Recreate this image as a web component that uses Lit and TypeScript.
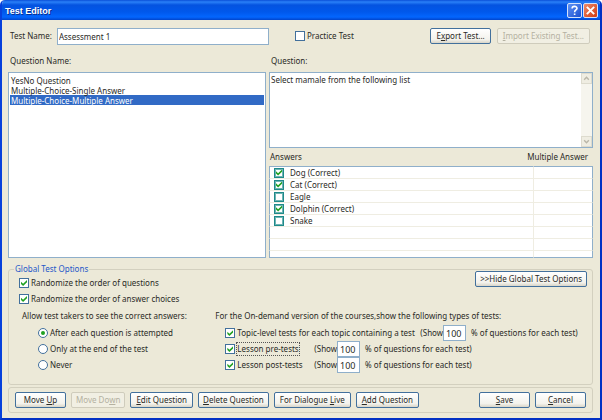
import { LitElement, html, css } from "lit";
import { customElement, state } from "lit/decorators.js";

interface Answer {
  label: string;
  checked: boolean;
}

@customElement("app-root")
export class AppRoot extends LitElement {
  static styles = css`
    :host {
      display: block;
      font: 8px/12px "Noto Sans", "Open Sans", sans-serif;
      color: #2a2a26;
      background: #fff;
    }
    * {
      box-sizing: border-box;
    }
    input,
    button,
    select,
    textarea {
      font: inherit;
      color: inherit;
      margin: 0;
    }
    .window {
      min-height: 100vh;
      display: flex;
      flex-direction: column;
      background: #ece9d8;
      border: solid #0640dc;
      border-width: 0 2px 2px;
      border-right-color: #0230c4;
      border-bottom-color: #0230c4;
      border-radius: 5px 5px 0 0;
      overflow: hidden;
    }
    .titlebar {
      height: 20px;
      display: flex;
      align-items: center;
      gap: 1px;
      padding: 1px 2px 0 3px;
      background: linear-gradient(#0a4fd8, #2a80f8 10%, #0453e0 25%, #0058ec 60%, #0366fe 85%, #0144cc);
      color: #fff;
    }
    .titlebar h1 {
      flex: 1;
      margin: 0;
      font: bold 9px/12px "Liberation Sans", Arial, sans-serif;
      text-shadow: 1px 1px #0a2f8c;
    }
    .caption {
      width: 15px;
      height: 15px;
      padding: 0;
      border: 1px solid #d5e2fb;
      border-radius: 2px;
      background: linear-gradient(135deg, #5e92f5, #1d50cf);
      display: flex;
    }
    .caption.close {
      background: linear-gradient(135deg, #ee8a6a, #cf3c12);
    }
    .caption svg {
      width: 13px;
      height: 13px;
    }
    main {
      flex: 1;
      display: flex;
      flex-direction: column;
      padding: 7px 7px 4px 6px;
    }
    .top {
      display: flex;
      align-items: center;
      height: 18px;
      padding: 0 3px 0 2px;
    }
    .name {
      width: 259px;
      display: flex;
      align-items: center;
      gap: 5px;
      margin-right: 26px;
    }
    .text {
      flex: 1;
      min-width: 0;
      height: 17px;
      padding: 0 1px;
      border: 1px solid #8fafca;
      background: #fff;
      outline: 0;
    }
    .push {
      margin-left: auto;
    }
    .btn {
      height: 16px;
      padding: 0 4px;
      border: 1px solid #42709c;
      border-radius: 2px;
      background: linear-gradient(#fff, #f3f2ec 75%, #d9d5c8);
      white-space: nowrap;
      line-height: 12px;
    }
    .btn:disabled {
      border-color: #cfccbc;
      background: #f1efe3;
      color: #b4b1a1;
    }
    .roomy {
      padding: 0 5px;
    }
    .wide {
      min-width: 51px;
    }
    .gap {
      margin-left: 6px;
    }
    .check {
      display: flex;
      align-items: center;
      gap: 2px;
      white-space: nowrap;
    }
    .box {
      appearance: none;
      flex: none;
      width: 10px;
      height: 10px;
      border: 1px solid #42709c;
      background: #fff;
      display: grid;
      place-items: center;
    }
    .box:checked::before {
      content: "";
      width: 6px;
      height: 6px;
      background: #21a121;
      clip-path: polygon(0 30%, 35% 62%, 100% 0, 100% 38%, 35% 100%, 0 68%);
    }
    .box.teal {
      border-color: #1f8a8a;
      box-shadow: inset 0 0 0 1px #6fb5b5;
    }
    .dot {
      border-radius: 50%;
    }
    .box.dot:checked::before {
      width: 4px;
      height: 4px;
      border-radius: 50%;
      clip-path: none;
    }
    .panes {
      display: grid;
      grid-template-columns: 258fr 324fr;
      column-gap: 3px;
      margin-top: 10px;
    }
    .pane {
      display: flex;
      flex-direction: column;
      min-width: 0;
    }
    .pane > label {
      height: 17px;
      padding-left: 2px;
    }
    .list {
      flex: 1;
      appearance: none;
      border: 1px solid #8fafca;
      border-radius: 0;
      background: #fff;
      padding: 2px 1px;
      outline: 0;
      overflow: hidden;
    }
    .list option {
      min-height: 0;
      height: 10px;
      line-height: 10px;
      padding: 0 1px;
      color: #2a2a26;
    }
    .list option:checked {
      background: linear-gradient(#316ac5, #316ac5);
      -webkit-text-fill-color: #fff;
    }
    .prompt {
      display: flex;
      height: 76px;
      border: 1px solid #8fafca;
      background: #fff;
    }
    .prompt textarea {
      flex: 1;
      min-width: 0;
      border: 0;
      padding: 1px;
      outline: 0;
      resize: none;
      background: none;
    }
    .scroll {
      width: 11px;
      display: flex;
      flex-direction: column;
      justify-content: space-between;
      background: #f6f5ee;
    }
    .arrow {
      height: 11px;
      padding: 1px;
      border: 1px solid #dddbce;
      background: #efede2;
      display: flex;
    }
    .arrow svg {
      width: 100%;
      height: 100%;
    }
    table {
      width: 100%;
      border-spacing: 0;
      table-layout: fixed;
    }
    th {
      height: 18px;
      padding: 0 1px;
      font-weight: normal;
      text-align: left;
      white-space: nowrap;
    }
    th:last-child {
      width: 60px;
      direction: rtl;
      text-align: right;
      padding-right: 5px;
    }
    tbody {
      background: #fff;
    }
    td {
      height: 12px;
      padding: 0 4px;
      border-bottom: 1px solid #efede2;
      line-height: 11px;
    }
    td:first-child {
      border-left: 1px solid #8fafca;
    }
    td:last-child {
      border-left: 1px solid #efede2;
      border-right: 1px solid #8fafca;
    }
    tbody tr:first-child td {
      height: 13px;
      border-top: 1px solid #8fafca;
    }
    tbody tr:last-child td {
      height: 7px;
      border-bottom: 1px solid #8fafca;
    }
    td .check {
      gap: 6px;
      height: 11px;
    }
    fieldset {
      display: grid;
      grid-template-columns: 201fr 371fr;
      margin: 5px 0 0;
      min-width: 0;
      padding: 0 5px 11px;
      border: 1px solid #d3d0bf;
      border-radius: 3px;
    }
    legend {
      padding: 0 1px;
      color: #2458c8;
    }
    .col {
      min-width: 0;
      display: flex;
      flex-direction: column;
    }
    .row {
      height: 16px;
      display: flex;
      align-items: center;
      white-space: nowrap;
    }
    .general {
      padding-left: 5px;
    }
    .heading {
      height: 18px;
      display: flex;
      align-items: center;
      white-space: nowrap;
    }
    .general .heading {
      padding-left: 3px;
    }
    .radios {
      padding-left: 19px;
    }
    .hide {
      height: 36px;
      margin-top: -4px;
      display: flex;
      justify-content: flex-end;
      align-items: flex-start;
    }
    .types {
      padding-left: 10px;
    }
    .lesson {
      width: 89px;
    }
    .topic {
      width: 195px;
    }
    .focus {
      outline: 1px dotted #555;
    }
    .pct {
      display: flex;
      align-items: center;
    }
    .pct input {
      width: 23px;
      height: 16px;
      padding: 0 2px;
      margin-right: 5px;
      border: 1px solid #8fafca;
      background: #fff;
      outline: 0;
      font-size: 9px;
    }
    .actions {
      display: flex;
      gap: 5px;
      margin-top: 2px;
      padding: 4px 6px;
      border: 1px solid #d3d0bf;
      border-radius: 3px;
    }
  `;

  @state() private answers: Answer[] = [
    { label: "Dog (Correct)", checked: true },
    { label: "Cat (Correct)", checked: true },
    { label: "Eagle", checked: false },
    { label: "Dolphin (Correct)", checked: true },
    { label: "Snake", checked: false },
  ];

  private blankRows = [0, 1, 2];

  private testType(label: unknown, size: string) {
    return html`<div class="row">
      <label class="check ${size}"><input class="box" type="checkbox" checked />${label}</label>
      <label class="pct">(Show<input type="text" value="100" /></label>
      <span>% of questions for each test)</span>
    </div>`;
  }

  private arrow(points: string, name: string) {
    return html`<button class="arrow" aria-label=${name} disabled>
      <svg viewBox="0 0 6 6"><polyline points=${points} fill="none" stroke="#b9b6a8" stroke-width="1.2" /></svg>
    </button>`;
  }

  render() {
    return html`<div class="window">
      <header class="titlebar">
        <h1>Test Editor</h1>
        <button class="caption" aria-label="Help">
          <svg viewBox="0 0 12 12" fill="none" stroke="#fff" stroke-width="1.5">
            <path d="M3.8 4.2C3.8 1.5 8.3 1.5 8.3 4C8.3 5.6 6.1 5.5 6.1 7.6M6.1 8.7V10.2" />
          </svg>
        </button>
        <button class="caption close" aria-label="Close">
          <svg viewBox="0 0 12 12" stroke="#fff" stroke-width="1.8"><path d="M2.6 2.6L9.4 9.4M9.4 2.6L2.6 9.4" /></svg>
        </button>
      </header>
      <main>
        <div class="top">
          <div class="name">
            <label for="name">Test Name:</label>
            <input class="text" id="name" type="text" value="Assessment 1" />
          </div>
          <label class="check"><input class="box" type="checkbox" />Practice Test</label>
          <button class="btn roomy push">E<u>x</u>port Test...</button>
          <button class="btn roomy gap" disabled><u>I</u>mport Existing Test...</button>
        </div>
        <div class="panes">
          <div class="pane">
            <label for="questions">Question Name:</label>
            <select class="list" id="questions" size="8">
              <option>YesNo Question</option>
              <option>Multiple-Choice-Single Answer</option>
              <option selected>Multiple-Choice-Multiple Answer</option>
            </select>
          </div>
          <div class="pane">
            <label for="prompt">Question:</label>
            <div class="prompt">
              <textarea id="prompt" .value=${"Select mamale from the following list"}></textarea>
              <div class="scroll">
                ${this.arrow("1,4 3,2 5,4", "Scroll up")} ${this.arrow("1,2 3,4 5,2", "Scroll down")}
              </div>
            </div>
            <table>
              <thead>
                <tr>
                  <th>Answers</th>
                  <th>Multiple Answer</th>
                </tr>
              </thead>
              <tbody>
                ${this.answers.map(
                  (a) => html`<tr>
                    <td>
                      <label class="check"
                        ><input class="box teal" type="checkbox" ?checked=${a.checked} />${a.label}</label
                      >
                    </td>
                    <td></td>
                  </tr>`
                )}
                ${this.blankRows.map(() => html`<tr><td></td><td></td></tr>`)}
              </tbody>
            </table>
          </div>
        </div>
        <fieldset>
          <legend>Global Test Options</legend>
          <div class="col general">
            <label class="row check"><input class="box" type="checkbox" checked />Randomize the order of questions</label>
            <label class="row check"
              ><input class="box" type="checkbox" checked />Randomize the order of answer choices</label
            >
            <div class="heading">Allow test takers to see the correct answers:</div>
            <div class="radios">
              <label class="row check"
                ><input class="box dot" type="radio" name="see" checked />After each question is attempted</label
              >
              <label class="row check"><input class="box dot" type="radio" name="see" />Only at the end of the test</label>
              <label class="row check"><input class="box dot" type="radio" name="see" />Never</label>
            </div>
          </div>
          <div class="col">
            <div class="hide"><button class="btn">&gt;&gt;Hide Global Test Options</button></div>
            <div class="heading">For the On-demand version of the courses,show the following types of tests:</div>
            <div class="types">
              ${this.testType("Topic-level tests for each topic containing a test", "topic")}
              ${this.testType(html`<span class="focus">Lesson pre-tests</span>`, "lesson")}
              ${this.testType("Lesson post-tests", "lesson")}
            </div>
          </div>
        </fieldset>
        <footer class="actions">
          <button class="btn wide">Move <u>U</u>p</button>
          <button class="btn" disabled>Move Do<u>w</u>n</button>
          <button class="btn roomy"><u>E</u>dit Question</button>
          <button class="btn"><u>D</u>elete Question</button>
          <button class="btn roomy">For Dialogue <u>L</u>ive</button>
          <button class="btn roomy"><u>A</u>dd Question</button>
          <button class="btn wide push"><u>S</u>ave</button>
          <button class="btn wide"><u>C</u>ancel</button>
        </footer>
      </main>
    </div>`;
  }
}
